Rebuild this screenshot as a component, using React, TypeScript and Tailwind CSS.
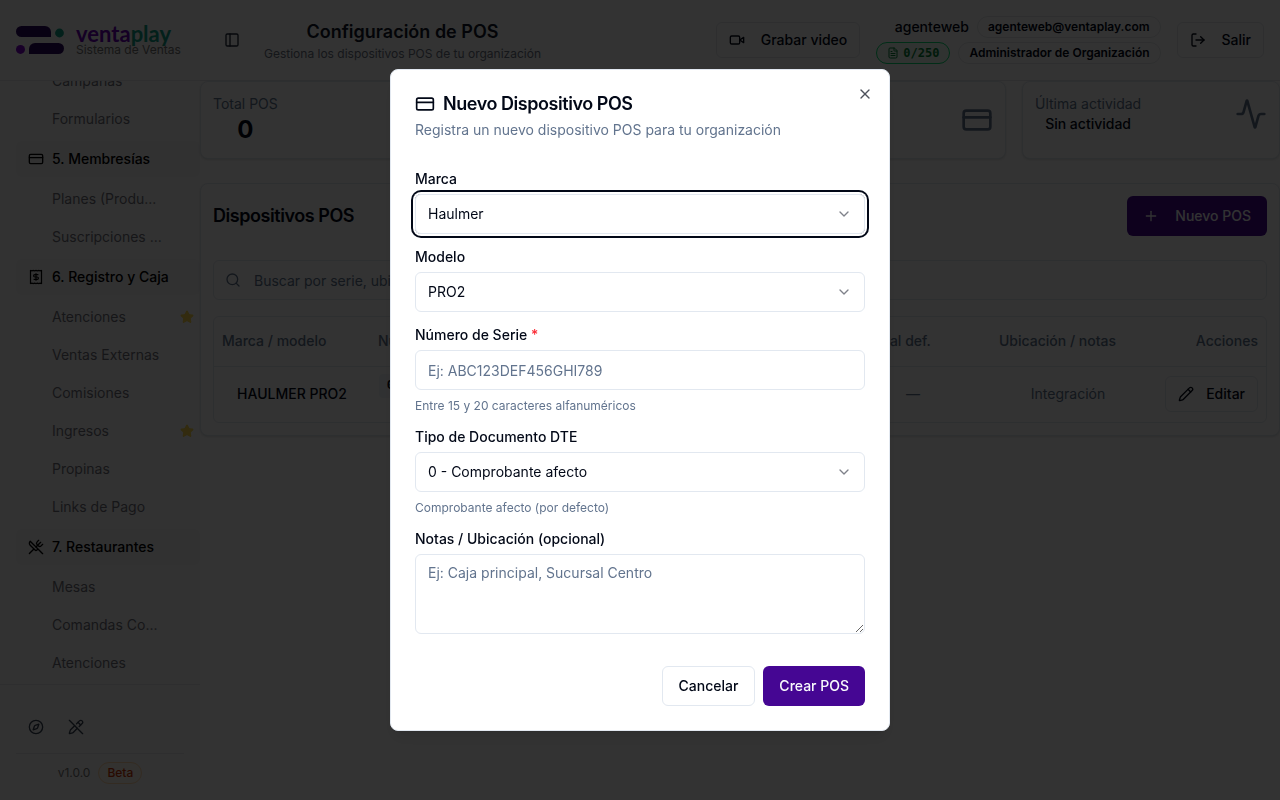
import type { ReactNode } from "react";
import {
  Activity,
  ChevronDown,
  Compass,
  CreditCard,
  FileText,
  LogOut,
  PanelLeft,
  Pencil,
  PencilOff,
  Plus,
  Search,
  Star,
  UtensilsCrossed,
  X,
} from "lucide-react";

function Logo() {
  return (
    <svg width="48" height="28" viewBox="0 0 48 28" aria-hidden="true">
      <path d="M5.5 0H29a6 6 0 0 1 6 6v5H5.5a5.5 5.5 0 0 1 0-11Z" fill="#2c0660" />
      <circle cx="43.5" cy="7" r="4.4" fill="#0fa086" />
      <circle cx="4.5" cy="23.4" r="4.5" fill="#7a00c8" />
      <path d="M19 17h23.5a5.5 5.5 0 0 1 0 11H13v-5a6 6 0 0 1 6-6Z" fill="#2c0660" />
    </svg>
  );
}

function ReceiptIcon() {
  return (
    <svg width="16" height="16" viewBox="0 0 16 16" fill="none" stroke="currentColor" strokeWidth="1.2" aria-hidden="true">
      <path d="M2.5 1v14M13.5 1v14" />
      <path d="M2.5 1.4l1.4.5 1.3-.5 1.4.5L8 1.4l1.4.5 1.4-.5 1.3.5 1.4-.5M2.5 14.6l1.4-.5 1.3.5 1.4-.5 1.4.5 1.4-.5 1.4.5 1.3-.5 1.4.5" />
      <path d="M10.4 5.6H6.8a1.2 1.2 0 0 0 0 2.4h2.4a1.2 1.2 0 0 1 0 2.4H5.6M8 4.2v7.6" />
    </svg>
  );
}

function VideoIcon() {
  return (
    <svg width="16" height="16" viewBox="0 0 24 24" fill="none" stroke="currentColor" strokeWidth="2" strokeLinecap="round" strokeLinejoin="round" aria-hidden="true">
      <path d="m22 8-6 4 6 4V8Z" />
      <rect x="2" y="6" width="14" height="12" rx="2" />
    </svg>
  );
}

type Section = {
  title?: string;
  icon?: ReactNode;
  items: { label: string; starred?: boolean }[];
};

const sections: Section[] = [
  { items: [{ label: "Campañas" }, { label: "Formularios" }] },
  {
    title: "5. Membresías",
    icon: <CreditCard size={16} />,
    items: [{ label: "Planes (Produ..." }, { label: "Suscripciones ..." }],
  },
  {
    title: "6. Registro y Caja",
    icon: <ReceiptIcon />,
    items: [
      { label: "Atenciones", starred: true },
      { label: "Ventas Externas" },
      { label: "Comisiones" },
      { label: "Ingresos", starred: true },
      { label: "Propinas" },
      { label: "Links de Pago" },
    ],
  },
  {
    title: "7. Restaurantes",
    icon: <UtensilsCrossed size={16} />,
    items: [{ label: "Mesas" }, { label: "Comandas Co..." }, { label: "Atenciones" }],
  },
];

function Sidebar() {
  return (
    <aside className="flex h-screen w-[200px] shrink-0 flex-col bg-[#fafafa]">
      <div className="flex h-[81px] shrink-0 items-center gap-3 border-b border-gray-200 px-4">
        <Logo />
        <div className="flex flex-col whitespace-nowrap">
          <span className="font-['Lato'] text-[22px] leading-5 font-bold text-[#6a00b8]">
            venta<span className="text-[#0fa086]">play</span>
          </span>
          <span className="text-xs leading-3 text-[#737373]">Sistema de Ventas</span>
        </div>
      </div>
      <nav className="flex min-h-0 flex-1 flex-col justify-end gap-1 overflow-hidden pb-[3px] pl-4">
        {sections.map((section, i) => (
          <div key={i} className="flex shrink-0 flex-col gap-1">
            {section.title && (
              <button className="flex h-9 items-center gap-2 rounded-md bg-[#f4f4f5] px-3 text-sm font-medium text-black">
                {section.icon}
                {section.title}
              </button>
            )}
            <ul className="flex flex-col gap-0.5">
              {section.items.map((item) => (
                <li key={item.label}>
                  <a href="#" className="flex h-9 items-center justify-between pr-1.5 pl-9 text-sm text-[#71717a]">
                    {item.label}
                    {item.starred && <Star size={14} className="fill-yellow-400 text-yellow-400 opacity-70" />}
                  </a>
                </li>
              ))}
            </ul>
          </div>
        ))}
      </nav>
      <div className="border-t border-gray-200 px-4 pt-[22px] pb-4">
        <div className="flex">
          <button aria-label="Explorar" className="flex size-10 items-center justify-center text-gray-700">
            <Compass size={16} />
          </button>
          <button aria-label="Desactivar edición" className="flex size-10 items-center justify-center text-gray-700">
            <PencilOff size={16} />
          </button>
        </div>
        <div className="mt-1.5 flex items-center justify-center gap-2 border-t border-gray-200 pt-2">
          <span className="text-xs text-[#737373]">v1.0.0</span>
          <span className="rounded-full border border-orange-200 bg-orange-50 px-2 py-0.5 text-xs font-medium text-orange-700">
            Beta
          </span>
        </div>
      </div>
    </aside>
  );
}

function Header() {
  return (
    <header className="flex h-[81px] shrink-0 items-center justify-between border-b border-gray-200 px-4 whitespace-nowrap">
      <div className="flex items-center gap-4">
        <button aria-label="Alternar menú" className="flex size-8 items-center justify-center text-gray-800">
          <PanelLeft size={16} />
        </button>
        <div className="flex flex-col items-center">
          <h1 className="text-lg leading-7 font-semibold text-gray-900">Configuración de POS</h1>
          <p className="text-xs text-gray-500">Gestiona los dispositivos POS de tu organización</p>
        </div>
      </div>
      <div className="flex items-center gap-4">
        <button className="flex h-9 items-center gap-4 rounded-md border border-gray-200 px-3 text-sm font-medium">
          <VideoIcon />
          Grabar video
        </button>
        <div className="flex flex-col items-end gap-1">
          <div className="flex items-center gap-2">
            <span className="text-sm font-medium">agenteweb</span>
            <span className="rounded-full border border-gray-200 px-2.5 py-0.5 text-xs font-semibold">
              agenteweb@ventaplay.com
            </span>
          </div>
          <div className="flex items-center gap-2">
            <span className="flex items-center gap-1 rounded-full border border-green-400 bg-green-50 px-2.5 py-0.5 font-['DejaVu_Sans_Mono',monospace] text-xs font-bold text-green-700">
              <FileText size={12} />
              0/250
            </span>
            <span className="rounded-full border border-gray-200 px-2.5 py-0.5 text-xs font-semibold">
              Administrador de Organización
            </span>
          </div>
        </div>
        <button className="flex h-9 items-center gap-4 rounded-md border border-gray-200 px-3 text-sm font-medium">
          <LogOut size={16} />
          Salir
        </button>
      </div>
    </header>
  );
}

function StatCard({ label, icon, children }: { label?: string; icon?: ReactNode; children?: ReactNode }) {
  return (
    <div className="rounded-lg border border-slate-200 bg-white p-3 shadow-sm">
      <div className="flex items-center justify-between">
        <div className={label ? "flex flex-col items-center" : "h-13"}>
          {label && <p className="text-sm text-slate-500">{label}</p>}
          {children}
        </div>
        {icon}
      </div>
    </div>
  );
}

function Devices() {
  return (
    <section className="rounded-lg border border-slate-200 bg-white p-3 shadow-sm">
      <div className="flex items-center justify-between">
        <h2 className="text-lg font-semibold tracking-tight">Dispositivos POS</h2>
        <button className="flex h-10 items-center gap-4 rounded-md bg-[#450693] px-4 text-sm font-medium text-slate-50">
          <Plus size={16} />
          Nuevo POS
        </button>
      </div>
      <div className="relative mt-6">
        <Search size={16} className="absolute top-3 left-3 text-slate-500" />
        <input
          type="search"
          aria-label="Buscar dispositivos"
          placeholder="Buscar por serie, ubicación"
          className="h-10 w-full rounded-md border border-slate-200 pr-3 pl-10 text-sm placeholder:text-slate-500"
        />
      </div>
      <div className="mt-4 rounded-md border border-slate-200">
        <table className="w-full table-fixed text-sm">
          <thead>
            <tr className="h-[49px] border-b border-slate-200 text-left text-slate-500">
              <th className="w-[156px] px-2 font-medium">Marca / modelo</th>
              <th className="w-[156px] px-2 font-medium">Número de serie</th>
              <th className="w-[156px] px-2 font-medium">Tipo DTE</th>
              <th className="px-2 font-medium">Estado</th>
              <th className="w-[156px] px-2 font-medium">Sucursal def.</th>
              <th className="w-[154px] px-2 font-medium">Ubicación / notas</th>
              <th className="w-[121px] px-2 text-right font-medium">Acciones</th>
            </tr>
          </thead>
          <tbody>
            <tr className="h-14 text-center">
              <td className="px-2 font-medium">HAULMER PRO2</td>
              <td className="px-2">
                <code className="mb-4 inline-block rounded bg-slate-100 px-2 py-1 font-['Liberation_Mono',monospace] text-xs font-semibold">
                  00000000000000000
                </code>
              </td>
              <td />
              <td />
              <td className="px-2 text-slate-500">—</td>
              <td className="px-2 text-slate-500">Integración</td>
              <td className="px-2">
                <button className="ml-auto flex h-9 items-center gap-3 rounded-md border border-slate-200 px-3 font-medium">
                  <Pencil size={16} />
                  Editar
                </button>
              </td>
            </tr>
          </tbody>
        </table>
      </div>
    </section>
  );
}

function Field({ id, label, required, help, children }: { id: string; label: string; required?: boolean; help?: string; children: ReactNode }) {
  return (
    <div className="flex flex-col gap-2">
      <label htmlFor={id} className="text-sm leading-none font-medium">
        {label}
        {required && <span className="text-red-500"> *</span>}
      </label>
      {children}
      {help && <p className="text-xs text-slate-500">{help}</p>}
    </div>
  );
}

function SelectBox({ id, value, focused }: { id: string; value: string; focused?: boolean }) {
  return (
    <div className={focused ? "relative rounded-md ring-2 ring-[#020817] ring-offset-2" : "relative"}>
      <select id={id} className="block h-10 w-full appearance-none rounded-md border border-slate-200 bg-white px-3 text-sm outline-none">
        <option>{value}</option>
      </select>
      <ChevronDown size={16} className="pointer-events-none absolute top-3 right-[13px] opacity-50" />
    </div>
  );
}

function NewDeviceDialog() {
  return (
    <div className="fixed inset-0 z-50 flex items-center justify-center bg-black/80">
      <div role="dialog" aria-modal="true" aria-labelledby="dialog-title" className="relative flex w-full max-w-[500px] flex-col rounded-lg border border-slate-200 bg-white p-6 shadow-lg">
        <div className="flex flex-col gap-1.5">
          <h2 id="dialog-title" className="flex items-center gap-2 text-lg leading-5 font-semibold tracking-tight">
            <CreditCard size={20} />
            Nuevo Dispositivo POS
          </h2>
          <p className="text-sm text-slate-500">Registra un nuevo dispositivo POS para tu organización</p>
        </div>
        <form className="mt-8 flex flex-col gap-4">
          <Field id="brand" label="Marca">
            <SelectBox id="brand" value="Haulmer" focused />
          </Field>
          <Field id="model" label="Modelo">
            <SelectBox id="model" value="PRO2" />
          </Field>
          <Field id="serial" label="Número de Serie" required help="Entre 15 y 20 caracteres alfanuméricos">
            <input
              id="serial"
              placeholder="Ej: ABC123DEF456GHI789"
              className="h-10 rounded-md border border-slate-200 px-3 py-2 text-sm placeholder:text-slate-500"
            />
          </Field>
          <Field id="dte" label="Tipo de Documento DTE" help="Comprobante afecto (por defecto)">
            <SelectBox id="dte" value="0 - Comprobante afecto" />
          </Field>
          <Field id="notes" label="Notas / Ubicación (opcional)">
            <textarea
              id="notes"
              placeholder="Ej: Caja principal, Sucursal Centro"
              className="h-20 rounded-md border border-slate-200 px-3 py-2 text-sm placeholder:text-slate-500"
            />
          </Field>
          <div className="mt-4 flex justify-end gap-2">
            <button type="button" className="h-10 rounded-md border border-slate-200 px-4 text-sm font-medium">
              Cancelar
            </button>
            <button type="submit" className="h-10 rounded-md bg-[#450693] px-4 text-sm font-medium text-slate-50">
              Crear POS
            </button>
          </div>
        </form>
        <button aria-label="Cerrar" className="absolute top-4 right-4 opacity-70">
          <X size={16} />
        </button>
      </div>
    </div>
  );
}

export default function App() {
  return (
    <div className="flex min-h-screen bg-white font-['Inter',sans-serif] text-[#020817]">
      <Sidebar />
      <div className="flex min-w-0 flex-1 flex-col">
        <Header />
        <main className="flex flex-col gap-6">
          <div className="grid grid-cols-4 gap-4">
            <StatCard label="Total POS">
              <p className="text-2xl font-bold">0</p>
            </StatCard>
            <StatCard />
            <StatCard icon={<CreditCard size={32} className="text-slate-500" />} />
            <StatCard label="Última actividad" icon={<Activity size={32} className="text-slate-500" />}>
              <p className="text-sm font-medium">Sin actividad</p>
            </StatCard>
          </div>
          <Devices />
        </main>
      </div>
      <NewDeviceDialog />
    </div>
  );
}
